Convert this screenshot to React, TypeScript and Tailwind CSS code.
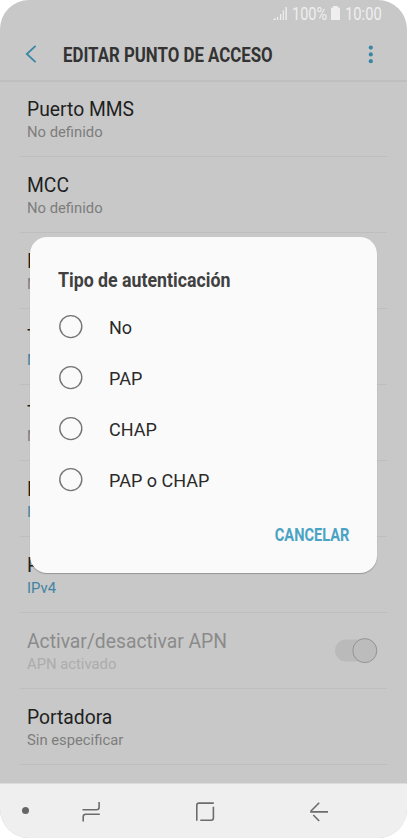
interface ApnField {
  name: string;
  value: string;
  /** Value picked from a list, drawn in the accent colour */
  accent?: boolean;
  disabled?: boolean;
}

const FIELDS: ApnField[] = [
  { name: 'Puerto MMS', value: 'No definido' },
  { name: 'MCC', value: 'No definido' },
  { name: 'MNC', value: 'No definido' },
  { name: 'Tipo de autenticación', value: 'No', accent: true },
  { name: 'Tipo de APN', value: 'No definido' },
  { name: 'Protocolo APN', value: 'IPv4', accent: true },
  { name: 'Protocolo de itinerancia APN', value: 'IPv4', accent: true },
  { name: 'Activar/desactivar APN', value: 'APN activado', disabled: true },
  { name: 'Portadora', value: 'Sin especificar' },
];

const AUTH_TYPES = ['No', 'PAP', 'CHAP', 'PAP o CHAP'];

function StatusBar() {
  return (
    <div className="flex h-[28px] items-center justify-end pr-[25px] text-[#efefef]">
      <svg width="14" height="14" viewBox="0 0 14 14" fill="currentColor">
        <path d="M0 13L2.5 10.5V13ZM4 10H5.2V13H4ZM7 7H8.2V13H7ZM9.7 3.5H10.9V13H9.7ZM12.4 0H13.8V13H12.4Z" />
      </svg>
      <span className="ml-[5px] w-[35px] whitespace-nowrap">
        <span className="inline-block origin-left scale-x-[0.825] text-[17.6px] leading-[28px]">100%</span>
      </span>
      <svg className="mb-[2px] ml-[4px]" width="9" height="14" viewBox="0 0 9 14" fill="currentColor">
        <path d="M2.2 0H6.8V1.4H8Q9 1.4 9 2.4V14H0V2.4Q0 1.4 1 1.4H2.2Z" />
      </svg>
      <span className="ml-[5px] w-[37px] whitespace-nowrap">
        <span className="inline-block origin-left scale-x-[0.84] text-[17.6px] leading-[28px]">10:00</span>
      </span>
    </div>
  );
}

function Header() {
  return (
    <header className="flex h-[54px] items-center border-b-2 border-[#bfbfbf] pl-[25px] pr-[34px]">
      <svg width="12" height="18" viewBox="0 0 12 18" fill="none" stroke="#3a87a5" strokeWidth="1.8">
        <path d="M10.6 0.8L1.8 9L10.6 17.2" />
      </svg>
      <h1 className="ml-[26px] flex-1 whitespace-nowrap pt-[4px]">
        <span className="inline-block origin-left scale-x-[0.863] text-[19.5px] font-bold leading-[26px] text-[#333]">
          EDITAR PUNTO DE ACCESO
        </span>
      </h1>
      <svg width="5" height="19" viewBox="0 0 5 19" fill="#3a87a5">
        <circle cx="2.8" cy="2.6" r="2.1" />
        <circle cx="2.8" cy="9.4" r="2.1" />
        <circle cx="2.8" cy="16.2" r="2.1" />
      </svg>
    </header>
  );
}

function FieldRow({ field }: { field: ApnField }) {
  const nameColor = field.disabled ? 'text-[#8b8b8b]' : 'text-[#1f1f1f]';
  const valueColor = field.disabled ? 'text-[#acacac]' : field.accent ? 'text-[#3f83a0]' : 'text-[#7d7d7d]';

  return (
    <li className="flex h-[76px] items-center justify-between border-b border-[#bebebe] pl-[7px]">
      <div className="whitespace-nowrap pt-[3px]">
        <div className={`text-[19.3px] leading-[24px] ${nameColor}`}>{field.name}</div>
        <div className={`text-[14.8px] leading-[21px] ${valueColor}`}>{field.value}</div>
      </div>
      {field.disabled && (
        <svg className="mr-[9px] shrink-0" width="43" height="26" viewBox="0 0 43 26">
          <rect x="0" y="1.5" width="41" height="22" rx="11" fill="#bababa" />
          <circle cx="29.8" cy="12.6" r="12" fill="#bcbcbc" stroke="#939393" />
        </svg>
      )}
    </li>
  );
}

function AuthDialog() {
  return (
    <div
      role="dialog"
      className="absolute left-[30px] top-[237px] h-[336px] w-[347px] rounded-[17px] bg-[#fafafa] pl-[28px] pr-[28px] pt-[30px] shadow-[0_1px_1px_rgba(0,0,0,0.25)]"
    >
      <h2 className="h-[34px] whitespace-nowrap">
        <span className="inline-block origin-left scale-x-[0.87] text-[20.4px] font-bold leading-[26px] text-[#404040]">
          Tipo de autenticación
        </span>
      </h2>
      <ul>
        {AUTH_TYPES.map(type => (
          <li key={type} className="flex h-[51px] items-center">
            <svg width="26" height="26" viewBox="0 0 26 26" fill="none" stroke="#757575" strokeWidth="1.4">
              <circle cx="12.8" cy="12.6" r="11" />
            </svg>
            <span className="ml-[25px] pt-[2px] text-[18px] leading-[26px] text-[#2a2a2a]">{type}</span>
          </li>
        ))}
      </ul>
      <div className="mt-[14px] flex justify-end">
        <button className="h-[32px] whitespace-nowrap">
          <span className="inline-block origin-right scale-x-[0.835] text-[17.5px] font-bold text-[#4ba3c3]">
            CANCELAR
          </span>
        </button>
      </div>
    </div>
  );
}

function NavBar() {
  return (
    <nav className="flex h-[55px] items-center border-t border-[#dcdcdc] bg-[#efefef] pl-[22px] text-[#6c6c6c]">
      <span className="mb-[1px] size-[7px] rounded-full bg-[#666]" />
      <svg className="mt-[2px] ml-[53px]" width="19" height="22" viewBox="0 0 19 22" fill="none" stroke="currentColor" strokeWidth="1.6">
        <path d="M0.5 8.7H14.6Q17.1 8.7 17.1 6.2V1M1.2 20.5V15.8Q1.2 13.3 3.7 13.3H17.8" />
      </svg>
      <svg className="mt-[2px] ml-[95px]" width="19" height="20" viewBox="0 0 19 20" fill="none" stroke="currentColor" strokeWidth="1.6">
        <path d="M0.8 18.8V3.3Q0.8 1.1 3 1.1H17.8M17.4 4.8V16Q17.4 18.2 15.2 18.2H4.3" />
      </svg>
      <svg className="mt-[2px] ml-[95px]" width="19" height="20" viewBox="0 0 19 20" fill="none" stroke="currentColor" strokeWidth="1.6">
        <path d="M9.2 0.8L1 9V9.9H18M3.3 13L9.2 19" />
      </svg>
    </nav>
  );
}

export default function App() {
  return (
    <div className="h-[838px] w-[407px] bg-white font-[Roboto,sans-serif]">
      <div className="relative flex h-full flex-col overflow-hidden rounded-[29px] bg-[#c8c8c8]">
        <StatusBar />
        <Header />
        <ul className="-mt-[1px] h-[702px] pl-[20px] pr-[20px]">
          {FIELDS.map(field => (
            <FieldRow key={field.name} field={field} />
          ))}
        </ul>
        <NavBar />
        <AuthDialog />
      </div>
    </div>
  );
}
